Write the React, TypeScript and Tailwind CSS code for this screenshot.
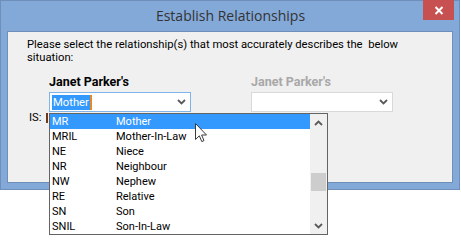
import React from "react";

const rows: [string, string][] = [
  ["MR", "Mother"],
  ["MRIL", "Mother-In-Law"],
  ["NE", "Niece"],
  ["NR", "Neighbour"],
  ["NW", "Nephew"],
  ["RE", "Relative"],
  ["SN", "Son"],
  ["SNIL", "Son-In-Law"],
];

function Chevron({ down = true }: { down?: boolean }) {
  return (
    <svg width="9" height="6" viewBox="0 0 9 6" className="block">
      <path
        d={down ? "M1 1 L4.5 4.5 L8 1" : "M1 5 L4.5 1.5 L8 5"}
        fill="none"
        stroke="#5a5a5a"
        strokeWidth="1.8"
      />
    </svg>
  );
}

export default function App() {
  const font = { fontFamily: 'Roboto, "Liberation Sans", sans-serif' };
  return (
    <div className="relative w-[461px] h-[235px] bg-white overflow-hidden" style={font}>
      <div className="w-[460px] h-[190px] bg-[#83a9d9] border border-[#6f8fba] flex flex-col px-[6px] pb-[6px]">
        <div className="h-[30px] flex items-start">
          <div className="w-[31px]" />
          <div className="flex-1 text-center text-[14px] leading-[30px] text-[#333333]" style={{ fontFamily: '"Open Sans", "Noto Sans", sans-serif' }}>
            Establish Relationships
          </div>
          <div className="w-[31px] h-[20px] -mt-px -mr-px bg-[#c75050] flex items-center justify-center">
            <svg width="10" height="9" viewBox="0 0 10 9">
              <path d="M1.5 1 L8.5 8 M8.5 1 L1.5 8" stroke="white" strokeWidth="2" />
            </svg>
          </div>
        </div>
        <div className="flex-1 bg-[#f0f0f0] border border-[#6f8fba] pl-[19px] pt-[6px] text-[11.25px] text-black">
          <p className="leading-[13px] w-[400px]">
            Please select the relationship(s) that most accurately describes the&nbsp; below
            <br />
            situation:
          </p>
          <div className="flex mt-[10px]">
            <div className="w-[224px] pl-[2px]">
              <div className="font-bold text-[12.5px] leading-[16px] pl-[20px]">Janet Parker's</div>
              <div className="mt-[2px] ml-[20px] w-[142px] h-[20px] bg-white border border-[#7eb4ea] flex items-center pl-[2px] pr-[4px]">
                <span className="bg-[#3399ff] text-white leading-[15px] px-px">Mother</span>
                <span className="w-[2px] h-[15px] bg-[#e08a2c]" />
                <span className="flex-1" />
                <Chevron />
              </div>
            </div>
            <div>
              <div className="font-bold text-[12.5px] leading-[16px] text-[#a8a8a8]">Janet Parker's</div>
              <div className="mt-[2px] w-[142px] h-[20px] bg-white border border-[#d9d9d9] flex items-center justify-end pr-[4px]">
                <Chevron />
              </div>
            </div>
          </div>
          <div className="flex items-center pl-[2px] h-[12px]">
            <span className="leading-[12px] w-[17px]">IS:</span>
            <span className="w-[2px] h-[10px] bg-[#6b3a1a]" />
          </div>
        </div>
      </div>

      <div className="absolute left-[49px] top-[113px] w-[279px] h-[122px] bg-white border border-[#646464] flex text-[11px] text-black">
        <div className="flex-1 flex flex-col">
          {rows.map(([code, name], i) => (
            <div
              key={code}
              className={
                "h-[15px] flex items-center leading-[15px] " +
                (i === 0 ? "bg-[#3399ff] text-white" : "")
              }
            >
              <span className="w-[66px] pl-[2px]">{code}</span>
              <span>{name}</span>
            </div>
          ))}
        </div>
        <div className="w-[17px] bg-[#f0f0f0] flex flex-col items-center">
          <div className="h-[17px] flex items-center justify-center">
            <Chevron down={false} />
          </div>
          <div className="h-[42px]" />
          <div className="w-[15px] h-[18px] bg-[#cdcdcd]" />
          <div className="flex-1" />
          <div className="h-[17px] flex items-center justify-center">
            <Chevron />
          </div>
        </div>
      </div>

      <svg className="absolute left-[195px] top-[123px]" width="13" height="21" viewBox="0 0 13 21">
        <path
          d="M0.5 0.5 L0.5 16.5 L4.3 12.8 L6.8 18.6 L9 17.6 L6.6 12 L11.5 12 Z"
          fill="white"
          stroke="#3c3c3c"
          strokeWidth="1"
          strokeLinejoin="miter"
        />
      </svg>
    </div>
  );
}
